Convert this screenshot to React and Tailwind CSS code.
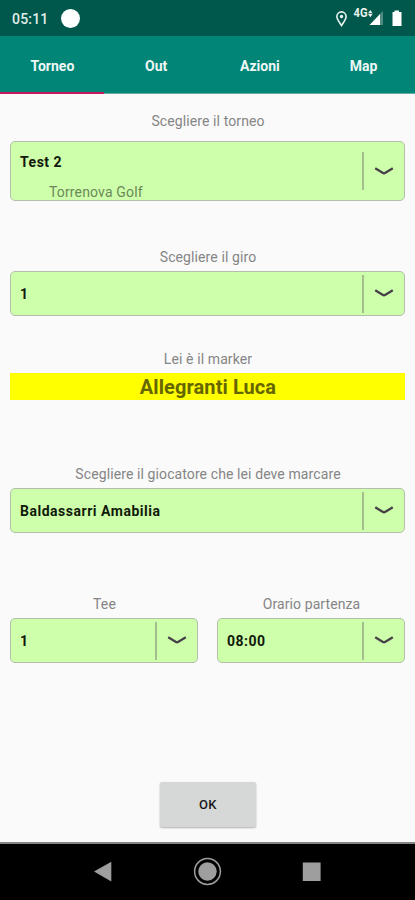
import React from "react";

function Chevron() {
  return (
    <svg width="20" height="10" viewBox="0 0 20 10" fill="none" stroke="#484048" strokeWidth="2.3">
      <path d="M1.2 1.3 L9 6 Q10 6.6 11 6 L18.8 1.3" />
    </svg>
  );
}

function Label({ children }) {
  return (
    <div className="flex h-5 items-center justify-center whitespace-nowrap pt-px pl-px text-[14px] tracking-[0.1px] text-[#858585]">
      {children}
    </div>
  );
}

function Select({ value, detail }) {
  return (
    <div
      className={`flex overflow-hidden rounded-[5px] border-[1.5px] border-[#b3bfaa] bg-[#ceffab] pl-[9px] ${
        detail ? "h-[60px]" : "h-[45px]"
      }`}
    >
      <div className={`flex-1 text-[14px] font-bold text-[#101a0a] ${detail ? "pt-[10px]" : "pt-[12px]"}`}>
        <div className="leading-5 tracking-[0.52px]">{value}</div>
        {detail && (
          <div className="mt-[10px] pl-[29px] text-[14px] leading-5 font-normal tracking-[0.15px] text-[#6b8858]">{detail}</div>
        )}
      </div>
      <div className="flex w-[42px] items-center">
        <div className="h-[38px] w-[1.5px] bg-[#a3bd8c]" />
        <div className="ml-[10px] mt-px">
          <Chevron />
        </div>
      </div>
    </div>
  );
}

const tabs = ["Torneo", "Out", "Azioni", "Map"];

export default function App() {
  return (
    <div className="flex h-[900px] w-[415px] flex-col overflow-hidden bg-[#fafafa] font-[Roboto,sans-serif]">
      <header className="flex h-9 shrink-0 items-center bg-[#00574b] pl-3 text-white">
        <span className="w-[49px] pt-[3px] text-[14px] font-medium tracking-[0.2px] text-[#e0eeea]">05:11</span>
        <span className="size-[19px] rounded-full bg-white" />
        <svg className="ml-auto" width="80" height="36" viewBox="0 0 80 36">
          <path
            d="M6.5 25.5 C4.5 22.2 1.9 19.6 1.9 16.5 A4.6 4.6 0 0 1 11.1 16.5 C11.1 19.6 8.5 22.2 6.5 25.5Z"
            fill="none"
            stroke="#e8f2ef"
            strokeWidth="1.6"
          />
          <circle cx="6.5" cy="16.5" r="1.7" fill="#e8f2ef" />
          <text x="18.5" y="17.3" fontSize="12" fontWeight="700" fill="#e8f2ef" textLength="14" lengthAdjust="spacingAndGlyphs">4G</text>
          <path d="M33 13.2 L35.3 10 L37.6 13.2Z M33 14 L35.3 17.2 L37.6 14Z" fill="#e8f2ef" />
          <path d="M48 11 V25 H44.5 V14.5Z" fill="#4d8b82" />
          <path d="M45 14 V25 H34.5Z" fill="white" />
          <path d="M57.5 12 H59.5 V10.5 H64 V12 H66.5 V26 H57.5Z" fill="white" />
        </svg>
      </header>
      <nav className="grid h-[58px] shrink-0 grid-cols-4 border-b border-[#62aaa1] bg-[#008577]">
        {tabs.map((tab, i) => (
          <div
            key={tab}
            className={`flex items-center justify-center border-b-2 pt-[5px] pl-px text-[14px] font-bold text-[#eef7f5] ${
              i === 0 ? "-mb-px border-[#c3195b]" : "border-transparent"
            }`}
          >
            {tab}
          </div>
        ))}
      </nav>
      <main className="flex flex-1 flex-col px-[10px] pt-[17px]">
        <Label>Scegliere il torneo</Label>
        <div className="mt-[10px]">
          <Select value="Test 2" detail="Torrenova Golf" />
        </div>
        <div className="mt-[46px]">
          <Label>Scegliere il giro</Label>
        </div>
        <div className="mt-1">
          <Select value="1" />
        </div>
        <div className="mt-[33px]">
          <Label>Lei è il marker</Label>
        </div>
        <div className="mt-1 flex h-[27px] items-center justify-center bg-[#ffff00] pt-px pl-px text-[20px] font-bold tracking-[0.08px] text-[#666600]">
          Allegranti Luca
        </div>
        <div className="mt-16">
          <Label>Scegliere il giocatore che lei deve marcare</Label>
        </div>
        <div className="mt-1">
          <Select value="Baldassarri Amabilia" />
        </div>
        <div className="mt-[61px] grid grid-cols-2 gap-[19px]">
          <div className="flex flex-col gap-1">
            <Label>Tee</Label>
            <Select value="1" />
          </div>
          <div className="flex flex-col gap-1">
            <Label>Orario partenza</Label>
            <Select value="08:00" />
          </div>
        </div>
        <button className="mt-[119px] ml-px h-[45px] w-[96px] self-center rounded-[2px] bg-[#d6d8d7] pt-px text-[13px] font-medium tracking-[0.5px] text-[#181818] shadow-[0_1px_2px_rgba(0,0,0,0.3)]">
          OK
        </button>
      </main>
      <footer className="h-[58px] shrink-0 border-t-2 border-[#858585] bg-black">
        <svg width="415" height="56" viewBox="0 844 415 56" fill="#9e9e9e">
          <path d="M94 871.5 L111.3 861.8 V881.5Z" />
          <circle cx="207.5" cy="871.5" r="12.9" fill="none" stroke="#9e9e9e" strokeWidth="1.5" />
          <circle cx="207.5" cy="871.5" r="9.2" />
          <rect x="302.8" y="862.5" width="17.8" height="18.5" />
        </svg>
      </footer>
    </div>
  );
}
